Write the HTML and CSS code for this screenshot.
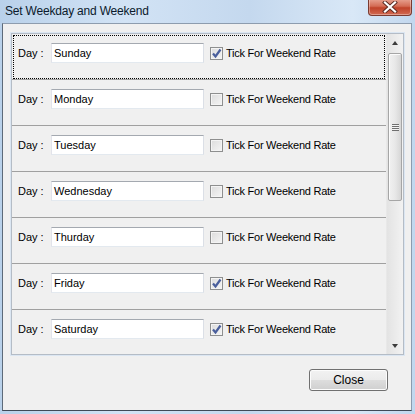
FILE: index.html
```html
<!DOCTYPE html>
<html>
<head>
<meta charset="utf-8">
<link rel="stylesheet" href="styles.css">
</head>
<body>
<div class="window">
  <div class="titlebar">
    <span class="title">Set Weekday and Weekend</span>
    <div class="close-x">
      <svg width="16" height="12" viewBox="0 0 16 12"><path d="M3 1.5 L13 10.5 M13 1.5 L3 10.5" stroke="#5a2a22" stroke-width="4" stroke-linecap="square"/><path d="M3 1.5 L13 10.5 M13 1.5 L3 10.5" stroke="#ffffff" stroke-width="2.2" stroke-linecap="square"/></svg>
    </div>
  </div>
  <div class="client">
    <div class="panel">
      <div class="list">
        <div class="row focused">
          <span class="lbl">Day :</span><span class="field">Sunday</span>
          <span class="chk on"><svg width="11" height="11" viewBox="0 0 11 11"><path d="M2 5.5 L4.5 8.5 L9.5 1.5" stroke="#4a5f9c" stroke-width="2.2" fill="none"/></svg></span><span class="cap">Tick For Weekend Rate</span>
        </div>
        <div class="row">
          <span class="lbl">Day :</span><span class="field">Monday</span>
          <span class="chk"></span><span class="cap">Tick For Weekend Rate</span>
        </div>
        <div class="row">
          <span class="lbl">Day :</span><span class="field">Tuesday</span>
          <span class="chk"></span><span class="cap">Tick For Weekend Rate</span>
        </div>
        <div class="row">
          <span class="lbl">Day :</span><span class="field">Wednesday</span>
          <span class="chk"></span><span class="cap">Tick For Weekend Rate</span>
        </div>
        <div class="row">
          <span class="lbl">Day :</span><span class="field">Thurday</span>
          <span class="chk"></span><span class="cap">Tick For Weekend Rate</span>
        </div>
        <div class="row">
          <span class="lbl">Day :</span><span class="field">Friday</span>
          <span class="chk on"><svg width="11" height="11" viewBox="0 0 11 11"><path d="M2 5.5 L4.5 8.5 L9.5 1.5" stroke="#4a5f9c" stroke-width="2.2" fill="none"/></svg></span><span class="cap">Tick For Weekend Rate</span>
        </div>
        <div class="row last">
          <span class="lbl">Day :</span><span class="field">Saturday</span>
          <span class="chk on"><svg width="11" height="11" viewBox="0 0 11 11"><path d="M2 5.5 L4.5 8.5 L9.5 1.5" stroke="#4a5f9c" stroke-width="2.2" fill="none"/></svg></span><span class="cap">Tick For Weekend Rate</span>
        </div>
      </div>
      <div class="scrollbar">
        <div class="arrow up"></div>
        <div class="track">
          <div class="thumb"><div class="grip"></div></div>
        </div>
        <div class="arrow down"></div>
      </div>
    </div>
    <div class="footer">
      <div class="btn">Close</div>
    </div>
  </div>
</div>
</body>
</html>
```
FILE: styles.css
```css
* { box-sizing: border-box; }
html, body { margin: 0; padding: 0; }
body {
  width: 415px;
  height: 414px;
  overflow: hidden;
  font-family: "Liberation Sans", Arial, sans-serif;
  font-size: 11px;
  color: #000;
}
.window {
  width: 415px;
  height: 414px;
  background: linear-gradient(90deg, #b9d1ea 0%, #d2e3f5 30%, #c4d8ee 60%, #d9e8f7 85%, #c2d7ee 100%);
  display: flex;
  flex-direction: column;
}
.titlebar {
  height: 23px;
  flex: none;
  display: flex;
  align-items: flex-start;
  justify-content: space-between;
  padding-left: 5px;
}
.title {
  font-size: 12px;
  margin-top: 4px;
  color: #0b1a2c;
  letter-spacing: -0.2px;
}
.close-x {
  width: 44px;
  height: 17px;
  margin-right: 3px;
  margin-top: -1px;
  border: 1px solid #7a3a30;
  border-top: none;
  border-radius: 0 0 4px 4px;
  background: linear-gradient(180deg, #e8a493 0%, #d46c55 45%, #c0432a 55%, #d26a52 100%);
  box-shadow: inset 0 0 0 1px rgba(255,255,255,0.35);
  display: flex;
  align-items: center;
  justify-content: center;
}
.client {
  margin: 0 3px 0 2px;
  height: 388px;
  background: #f0f0f0;
  border: 1px solid #8d9cae;
  border-bottom-color: #3f4a57;
  border-left-color: #5d6a79;
  display: flex;
  flex-direction: column;
}
.panel {
  margin: 9px 0 0 8px;
  width: 393px;
  height: 322px;
  border: 1px solid #b4bcc6;
  box-shadow: 0 0 0 1px #dbe6f2;
  background: #f0f0f0;
  display: flex;
  overflow: hidden;
}
.list {
  flex: 1;
  display: flex;
  flex-direction: column;
}
.row {
  height: 46px;
  flex: none;
  border-bottom: 1px solid #a0a0a0;
  display: flex;
  align-items: flex-start;
  padding: 9px 0 0 6px;
}
.row.last { border-bottom: none; }
.row.focused {
  outline: 1px dotted #000;
  outline-offset: -2px;
  padding-top: 9px;
}
.lbl {
  width: 33px;
  line-height: 20px;
  flex: none;
}
.field {
  width: 153px;
  height: 20px;
  flex: none;
  background: #fff;
  border: 1px solid #abadb3;
  border-top-color: #a4a9b0;
  border-right-color: #dbdfe6;
  border-bottom-color: #e3e9ef;
  border-left-color: #e2e3ea;
  padding-left: 2px;
  line-height: 18px;
  color: #000;
}
.chk {
  width: 13px;
  height: 13px;
  flex: none;
  margin: 4px 3px 0 6px;
  border: 1px solid #8e8f8f;
  background: linear-gradient(135deg, #dcdcdc 0%, #f5f5f5 100%);
  box-shadow: inset 0 0 0 1px #f4f4f4;
  display: flex;
  align-items: center;
  justify-content: center;
}
.cap {
  line-height: 20px;
  letter-spacing: -0.25px;
}
.scrollbar {
  width: 17px;
  flex: none;
  background: linear-gradient(90deg, #e3e3e3, #f2f2f2);
  border-left: 1px solid #e8e8e8;
  display: flex;
  flex-direction: column;
}
.arrow {
  height: 17px;
  flex: none;
  display: flex;
  align-items: center;
  justify-content: center;
}
.arrow::before {
  content: "";
  width: 0;
  height: 0;
  border-left: 3.5px solid transparent;
  border-right: 3.5px solid transparent;
}
.arrow.up::before { border-bottom: 4px solid #3c3c3c; }
.arrow.down::before { border-top: 4px solid #3c3c3c; }
.track {
  flex: 1;
  padding: 2px 1px 0 1px;
}
.thumb {
  height: 148px;
  border: 1px solid #a6a6a6;
  border-radius: 2px;
  background: linear-gradient(90deg, #f1f1f1 0%, #e8e8e8 50%, #d6d6d6 100%);
  box-shadow: inset 1px 1px 0 #fbfbfb;
  display: flex;
  align-items: center;
  justify-content: center;
}
.grip {
  width: 7px;
  height: 7px;
  background: repeating-linear-gradient(180deg, #6f6f6f 0 1px, #f3f3f3 1px 2px);
}
.footer {
  flex: 1;
  display: flex;
  justify-content: flex-end;
  align-items: flex-start;
  padding: 14px 23px 0 0;
}
.btn {
  width: 79px;
  height: 22px;
  border: 1px solid #707070;
  border-radius: 3px;
  background: linear-gradient(180deg, #f2f2f2 0%, #ebebeb 48%, #dddddd 52%, #cfcfcf 100%);
  box-shadow: inset 0 0 0 1px #fcfcfc;
  text-align: center;
  line-height: 20px;
  font-size: 12px;
}
```
